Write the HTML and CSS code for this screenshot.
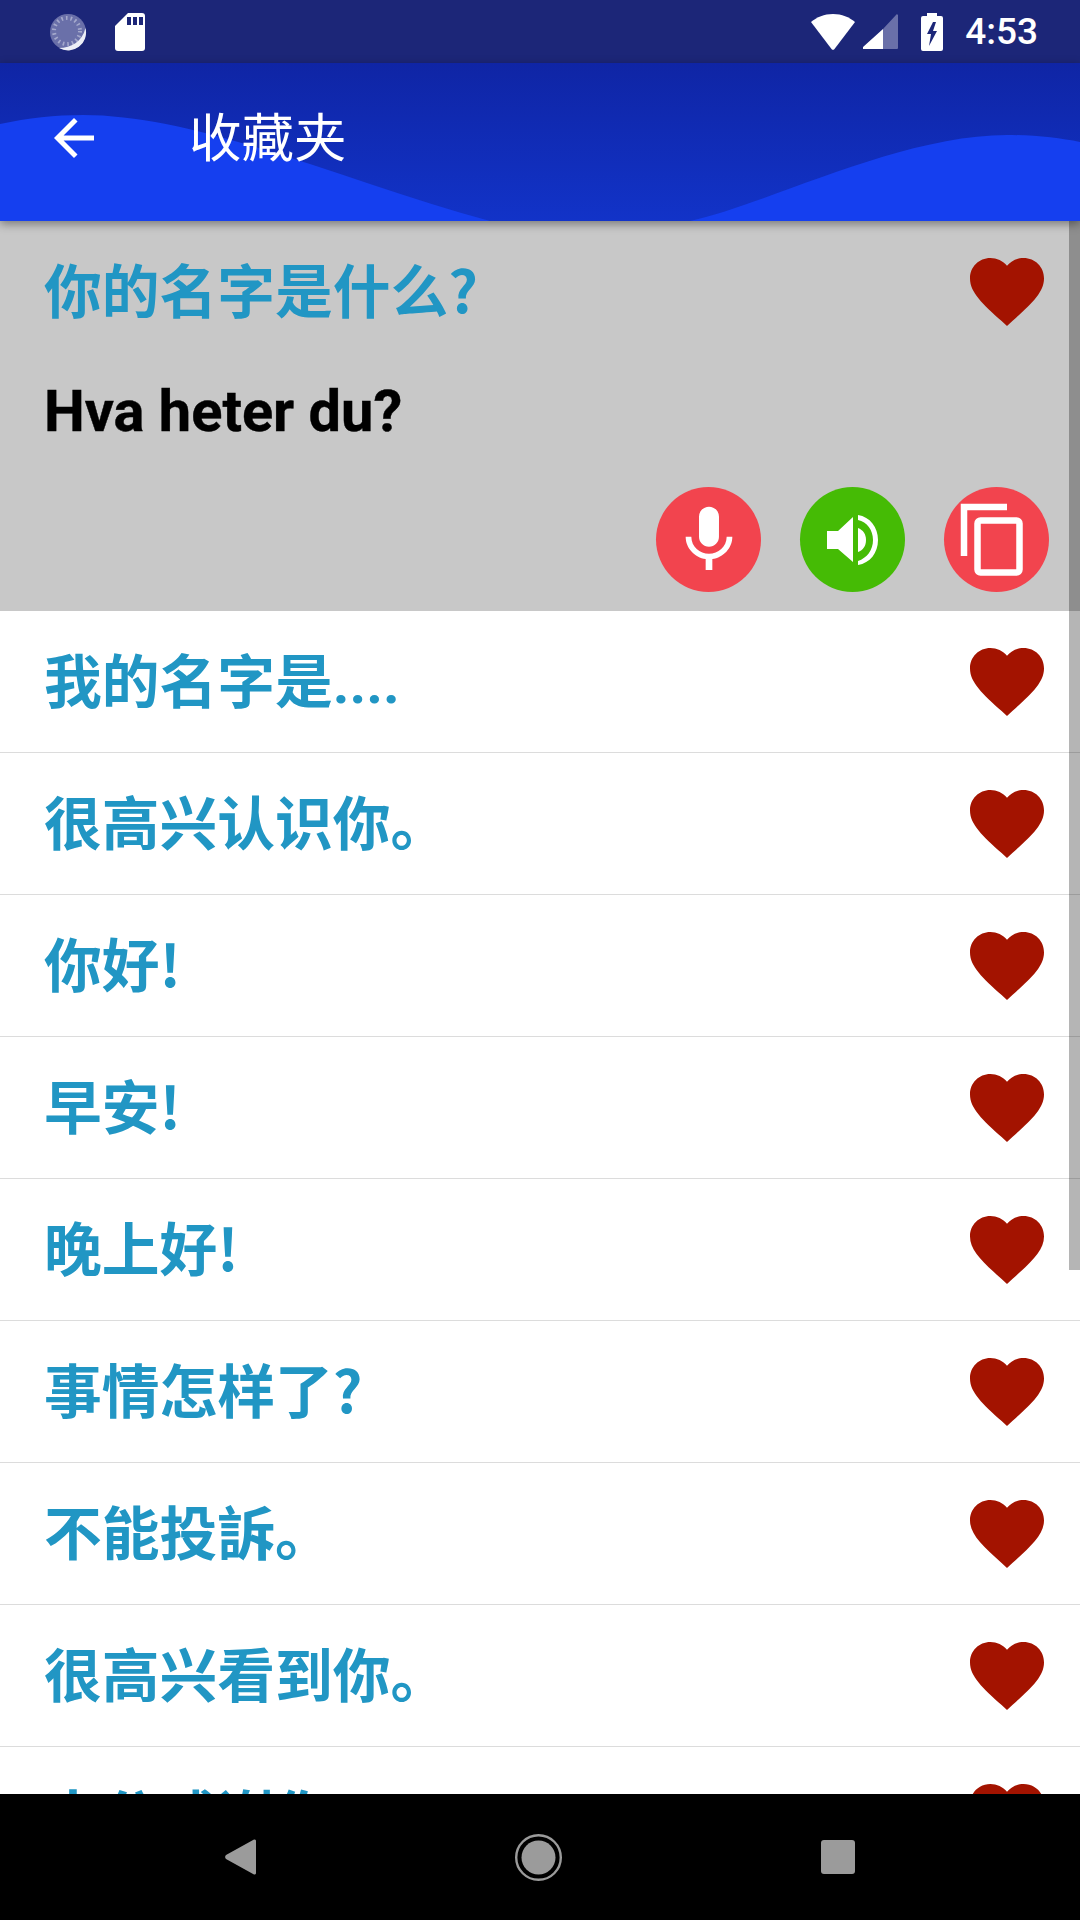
FILE: index.html
```html
<!DOCTYPE html>
<html lang="zh-CN">
<head>
<meta charset="utf-8">
<title>收藏夹</title>
<link rel="stylesheet" href="styles.css">
</head>
<body>
<div class="screen">
  <header class="status">
    <div class="status-left">
      <svg class="ic-loader" width="38" height="38" viewBox="0 0 38 38">
        <circle cx="19" cy="19" r="18" fill="#6a70a9"/>
        <circle cx="18" cy="18" r="13" fill="none" stroke="#a5a9cc" stroke-width="4" stroke-dasharray="1.6 3"/>
        <path fill="#eceef6" d="M36.500 15A18 18 0 0 1 10 35C22 35 33 29 36.500 15Z"/>
      </svg>
      <svg class="ic-sd" width="30" height="38" viewBox="0 0 30 38">
        <path fill="#fff" d="M13 0H27a3 3 0 0 1 3 3V35a3 3 0 0 1-3 3H3a3 3 0 0 1-3-3V13Z"/>
        <path fill="#1c2678" d="M12 4h4v8h-4zM18 4h4v8h-4zM24 4h4v8h-4z"/>
      </svg>
    </div>
    <div class="status-right">
      <svg width="44" height="36" viewBox="0 0 44 36"><path fill="#fff" d="M22 0C13 0 6 3 0 8L20.500 35a2 2 0 0 0 3 0L44 8C38 3 31 0 22 0Z"/></svg>
      <svg class="ic-signal" width="35" height="35" viewBox="0 0 35 35"><path fill="#6a70a9" d="M20 15 33 1a1 1 0 0 1 2 1V34a1 1 0 0 1-1 1H20Z"/><path fill="#fff" d="M20 15V35H1a1 1 0 0 1-1-2Z"/></svg>
      <svg class="ic-battery" width="22" height="38" viewBox="0 0 22 38"><path fill="#fff" d="M6 0h10v3h4a2 2 0 0 1 2 2V36a2 2 0 0 1-2 2H2a2 2 0 0 1-2-2V5a2 2 0 0 1 2-2h4Z"/><path fill="#1c2678" d="M12 9 6 21h4l-2 12 8-15h-4l3-9Z"/></svg>
      <span class="clock">4:53</span>
    </div>
  </header>

  <nav class="toolbar">
    <svg class="wave" viewBox="0 0 1080 158" preserveAspectRatio="none">
      <path fill="#153fef" d="M0 61C28 55 55 52 83 52C200 52 350 120 490 158L690 158C770 140 900 72 1007 72C1035 72 1060 75 1080 79L1080 158L0 158Z"/>
    </svg>
    <svg class="back" width="60" height="60" viewBox="0 0 24 24"><path fill="#fff" d="M20 11H7.830l5.590-5.590L12 4l-8 8 8 8 1.410-1.410L7.830 13H20v-2z"/></svg>
    <h1 class="title">收藏夹</h1>
  </nav>

  <main class="list">
    <section class="card">
      <div class="row-head">
        <span class="phrase">你的名字是什么?</span>
        <svg class="heart" viewBox="2 3 20 18.35"><path d="M12 21.350l-1.450-1.320C5.400 15.360 2 12.280 2 8.500 2 5.420 4.420 3 7.500 3c1.740 0 3.410.81 4.500 2.090C13.090 3.810 14.760 3 16.500 3 19.580 3 22 5.420 22 8.500c0 3.780-3.400 6.860-8.550 11.540L12 21.350z"/></svg>
      </div>
      <p class="translation">Hva heter du?</p>
      <div class="actions">
        <button class="action red" type="button"><svg width="80" height="80" viewBox="0 0 24 24"><path fill="#fff" d="M12 14c1.660 0 2.990-1.340 2.990-3L15 5c0-1.660-1.340-3-3-3S9 3.340 9 5v6c0 1.660 1.340 3 3 3zm5.300-3c0 3-2.540 5.100-5.300 5.100S6.700 14 6.700 11H5c0 3.410 2.720 6.230 6 6.720V21h2v-3.280c3.280-.48 6-3.300 6-6.720h-1.700z"/></svg></button>
        <button class="action green" type="button"><svg width="105" height="105" viewBox="0 0 105 105"><path fill="#fff" d="M27 44H38L53 30V75L38 62H27Z"/><path fill="#fff" d="M58 41C63 43 66 47 66 53C66 59 63 63 58 65Z"/><path fill="#fff" d="M58 28C70 30 78 40 78 53C78 66 70 76 58 78V74C67 71 73 63 73 53C73 43 67 35 58 33Z"/></svg></button>
        <button class="action red" type="button"><svg width="105" height="105" viewBox="0 0 105 105"><path fill="none" stroke="#fff" stroke-width="6.500" d="M20 69V20H63"/><rect x="33.500" y="33.500" width="42" height="52" rx="3" fill="none" stroke="#fff" stroke-width="6.500"/></svg></button>
      </div>
    </section>

    <div class="row"><span class="phrase phrase-latin-dots">我的名字是....</span><svg class="heart" viewBox="2 3 20 18.35"><path d="M12 21.350l-1.450-1.320C5.400 15.360 2 12.280 2 8.500 2 5.420 4.420 3 7.500 3c1.740 0 3.410.81 4.500 2.090C13.090 3.810 14.760 3 16.500 3 19.580 3 22 5.420 22 8.500c0 3.780-3.400 6.860-8.550 11.540L12 21.350z"/></svg></div>
    <div class="row"><span class="phrase">很高兴认识你。</span><svg class="heart" viewBox="2 3 20 18.35"><path d="M12 21.350l-1.450-1.320C5.400 15.360 2 12.280 2 8.500 2 5.420 4.420 3 7.500 3c1.740 0 3.410.81 4.500 2.090C13.090 3.810 14.760 3 16.500 3 19.580 3 22 5.420 22 8.500c0 3.780-3.400 6.860-8.550 11.540L12 21.350z"/></svg></div>
    <div class="row"><span class="phrase">你好!</span><svg class="heart" viewBox="2 3 20 18.35"><path d="M12 21.350l-1.450-1.320C5.400 15.360 2 12.280 2 8.500 2 5.420 4.420 3 7.500 3c1.740 0 3.410.81 4.500 2.090C13.090 3.810 14.760 3 16.500 3 19.580 3 22 5.420 22 8.500c0 3.780-3.400 6.860-8.550 11.540L12 21.350z"/></svg></div>
    <div class="row"><span class="phrase">早安!</span><svg class="heart" viewBox="2 3 20 18.35"><path d="M12 21.350l-1.450-1.320C5.400 15.360 2 12.280 2 8.500 2 5.420 4.420 3 7.500 3c1.740 0 3.410.81 4.500 2.090C13.090 3.810 14.760 3 16.500 3 19.580 3 22 5.420 22 8.500c0 3.780-3.400 6.860-8.550 11.540L12 21.350z"/></svg></div>
    <div class="row"><span class="phrase">晚上好!</span><svg class="heart" viewBox="2 3 20 18.35"><path d="M12 21.350l-1.450-1.320C5.400 15.360 2 12.280 2 8.500 2 5.420 4.420 3 7.500 3c1.740 0 3.410.81 4.500 2.090C13.090 3.810 14.760 3 16.500 3 19.580 3 22 5.420 22 8.500c0 3.780-3.400 6.860-8.550 11.540L12 21.350z"/></svg></div>
    <div class="row"><span class="phrase">事情怎样了?</span><svg class="heart" viewBox="2 3 20 18.35"><path d="M12 21.350l-1.450-1.320C5.400 15.360 2 12.280 2 8.500 2 5.420 4.420 3 7.500 3c1.740 0 3.410.81 4.500 2.090C13.090 3.810 14.760 3 16.500 3 19.580 3 22 5.420 22 8.500c0 3.780-3.400 6.860-8.550 11.540L12 21.350z"/></svg></div>
    <div class="row"><span class="phrase">不能投訴。</span><svg class="heart" viewBox="2 3 20 18.35"><path d="M12 21.350l-1.450-1.320C5.400 15.360 2 12.280 2 8.500 2 5.420 4.420 3 7.500 3c1.740 0 3.410.81 4.500 2.090C13.090 3.810 14.760 3 16.500 3 19.580 3 22 5.420 22 8.500c0 3.780-3.400 6.860-8.550 11.540L12 21.350z"/></svg></div>
    <div class="row"><span class="phrase">很高兴看到你。</span><svg class="heart" viewBox="2 3 20 18.35"><path d="M12 21.350l-1.450-1.320C5.400 15.360 2 12.280 2 8.500 2 5.420 4.420 3 7.500 3c1.740 0 3.410.81 4.500 2.090C13.090 3.810 14.760 3 16.500 3 19.580 3 22 5.420 22 8.500c0 3.780-3.400 6.860-8.550 11.540L12 21.350z"/></svg></div>
    <div class="row"><span class="phrase">十分感谢你</span><svg class="heart" viewBox="2 3 20 18.35"><path d="M12 21.350l-1.450-1.320C5.400 15.360 2 12.280 2 8.500 2 5.420 4.420 3 7.500 3c1.740 0 3.410.81 4.500 2.090C13.090 3.810 14.760 3 16.500 3 19.580 3 22 5.420 22 8.500c0 3.780-3.400 6.860-8.550 11.540L12 21.350z"/></svg></div>
    <div class="scrollbar"></div>
  </main>

  <footer class="navbar">
    <svg width="31" height="36" viewBox="0 0 31 36"><path fill="#9b9b9b" d="M29 .5a1.500 1.500 0 0 1 2 1.500V34a1.500 1.500 0 0 1-2 1.500L1 20a3 3 0 0 1 0-4Z"/></svg>
    <svg width="47" height="47" viewBox="0 0 47 47"><circle cx="23.500" cy="23.500" r="22.300" fill="none" stroke="#9b9b9b" stroke-width="2.400"/><circle cx="23.500" cy="23.500" r="17" fill="#9b9b9b"/></svg>
    <svg width="34" height="34" viewBox="0 0 34 34"><rect width="34" height="34" rx="3" fill="#9b9b9b"/></svg>
  </footer>
</div>
</body>
</html>
```

FILE: styles.css
```css
* { box-sizing: border-box; }
html, body { margin: 0; padding: 0; }
body { width: 1080px; height: 1920px; overflow: hidden; background: #fff; font-family: Roboto, "Noto Sans CJK SC", sans-serif; }
.screen { width: 1080px; height: 1920px; display: flex; flex-direction: column; }

.status { height: 63px; flex: none; background: #1c2678; display: flex; justify-content: space-between; align-items: center; padding: 0 42px 0 49px; }
.status-left { display: flex; align-items: center; gap: 28px; }
.status-right { display: flex; align-items: center; gap: 8px; }
.ic-battery { margin: 0 14px 0 15px; }
.clock { color: #fff; font-size: 37px; font-weight: 500; line-height: 1; }

.toolbar { position: relative; z-index: 2; height: 158px; flex: none; display: flex; align-items: center; padding-left: 44px; background: linear-gradient(#0f25a5, #1233c8); box-shadow: 0 3px 9px rgba(0,0,0,.4); }
.wave { position: absolute; inset: 0; width: 100%; height: 100%; }
.back { position: relative; flex: none; margin-top: -8px; }
.title { position: relative; margin: -5px 0 0 85px; color: #fff; font-size: 52.500px; font-weight: 400; line-height: 1; }

.list { position: relative; flex: 1; min-height: 0; overflow: hidden; }
.card { height: 390px; background: #c8c8c8; display: flex; flex-direction: column; }
.row-head { height: 142px; display: flex; align-items: center; justify-content: space-between; padding: 0 36px 0 44px; }
.translation { margin: 14px 0 0; padding-left: 44px; font-size: 57.750px; font-weight: 700; line-height: 68px; color: #000; -webkit-text-stroke: .4px #000; }
.actions { display: flex; justify-content: flex-end; gap: 39px; padding: 42px 31px 0 0; }
.action { width: 105px; height: 105px; padding: 0; border: 0; border-radius: 50%; display: flex; align-items: center; justify-content: center; }
.red { background: #f2444e; }
.green { background: #45bb05; }

.row { height: 142px; display: flex; align-items: center; justify-content: space-between; padding: 0 36px 0 44px; border-bottom: 1px solid #dcdcdc; }
.phrase { font-family: "Noto Sans CJK SC", Roboto, sans-serif; color: #2196c4; font-size: 57.750px; font-weight: 700; line-height: 1; padding-bottom: 6px; }
.phrase-latin-dots { font-family: Roboto, "Noto Sans CJK SC", sans-serif; padding: 4px 0 0; }
.heart { width: 74px; height: 68px; flex: none; fill: #a31300; }
.scrollbar { position: absolute; top: 0; right: 0; width: 11px; height: 1049px; background: rgba(0,0,0,.29); }

.navbar { height: 126px; flex: none; background: #000; display: flex; align-items: center; justify-content: center; gap: 259px; }
```
